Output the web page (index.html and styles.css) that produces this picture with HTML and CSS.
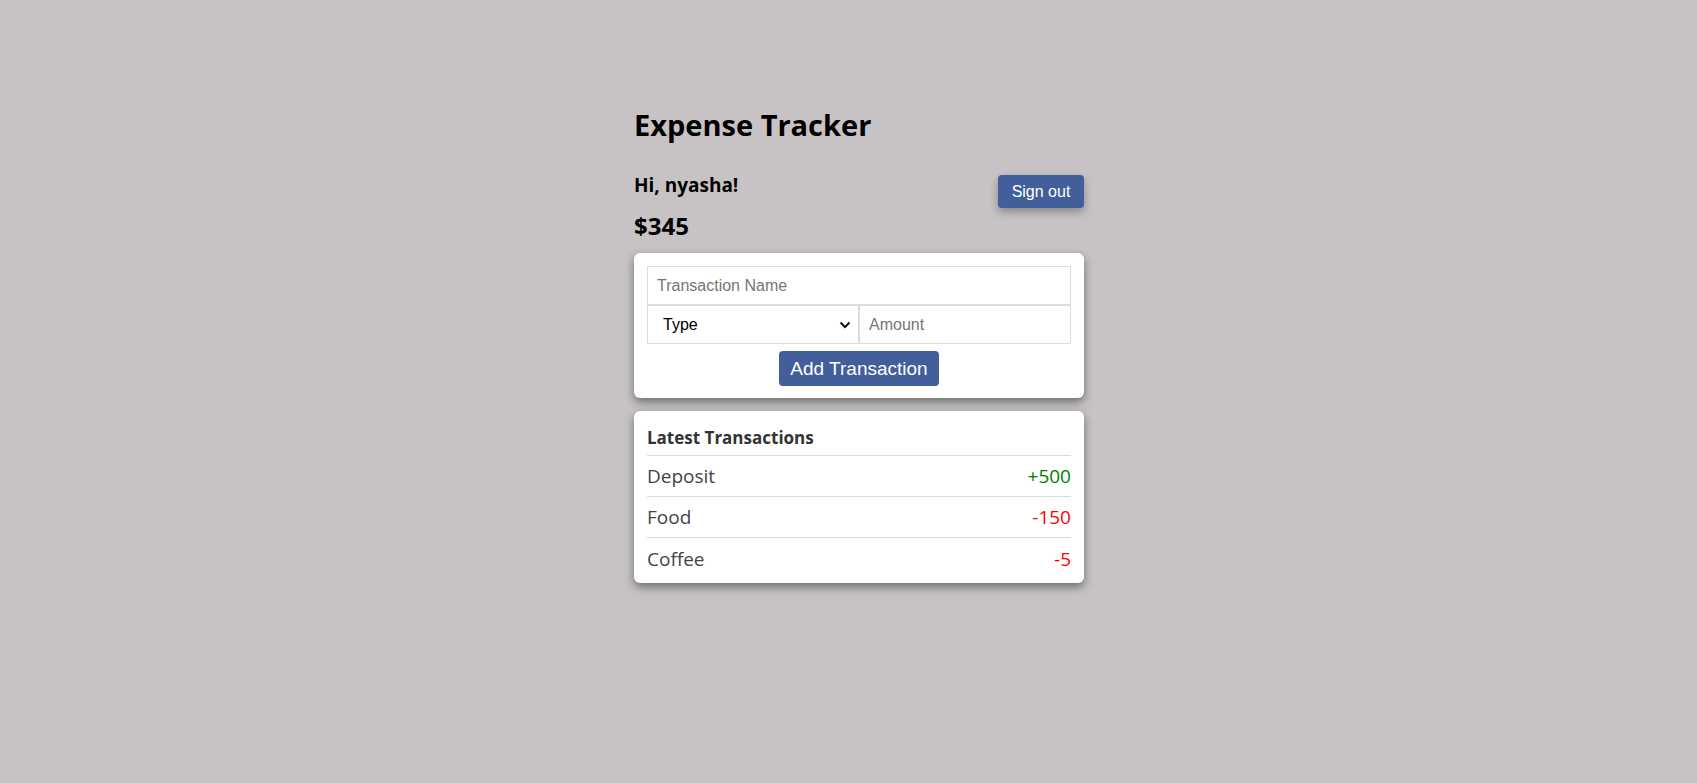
FILE: index.html
```html
<!DOCTYPE html>
<html lang="en">
<head>
<meta charset="utf-8">
<title>Expense Tracker</title>
<link rel="stylesheet" href="styles.css">
</head>
<body>
<div class="page">
  <main class="app">
    <h1 class="title">Expense Tracker</h1>
    <div class="user-row">
      <h3 class="greeting">Hi, nyasha!</h3>
      <button class="btn btn-signout" type="button">Sign out</button>
    </div>
    <h2 class="balance">$345</h2>

    <form class="card form-card">
      <input class="field field-name" type="text" placeholder="Transaction Name">
      <div class="field-row">
        <div class="select-wrap">
          <select class="field field-type">
            <option>Type</option>
            <option>Income</option>
            <option>Expense</option>
          </select>
          <svg class="chevron" width="12" height="8" viewBox="0 0 12 8"><path d="M1.5 1.5 L6 6 L10.5 1.5" fill="none" stroke="#111" stroke-width="2"/></svg>
        </div>
        <input class="field field-amount" type="text" placeholder="Amount">
      </div>
      <div class="actions">
        <button class="btn btn-add" type="button">Add Transaction</button>
      </div>
    </form>

    <section class="card list-card">
      <h4 class="list-title">Latest Transactions</h4>
      <ul class="tx-list">
        <li class="tx"><span class="tx-name">Deposit</span><span class="tx-amount pos">+500</span></li>
        <li class="tx"><span class="tx-name">Food</span><span class="tx-amount neg">-150</span></li>
        <li class="tx"><span class="tx-name">Coffee</span><span class="tx-amount neg">-5</span></li>
      </ul>
    </section>
  </main>
</div>
</body>
</html>
```

FILE: styles.css
```css
* { box-sizing: border-box; }

html, body {
  margin: 0;
  height: 100%;
}

body {
  background: #c7c3c4;
  font-family: "Open Sans", "Noto Sans", sans-serif;
  color: #000;
}

.page {
  display: flex;
  justify-content: center;
  padding-left: 21px;
  padding-top: 105px;
}

.app {
  width: 450px;
  display: flex;
  flex-direction: column;
}

.title {
  margin: 0;
  font-size: 29px;
  line-height: 40px;
  font-weight: 700;
}

.user-row {
  display: flex;
  justify-content: space-between;
  align-items: flex-start;
  margin-top: 26px;
}

.greeting {
  margin: 0;
  font-size: 19px;
  line-height: 28px;
  font-weight: 700;
}

.btn {
  font-family: "Liberation Sans", Arial, sans-serif;
  background: #425f9b;
  color: #fff;
  border: none;
  border-radius: 4px;
  cursor: pointer;
}

.btn-signout {
  margin-top: 4px;
  width: 86px;
  height: 33px;
  font-size: 16px;
  box-shadow: 0 4px 8px rgba(0, 0, 0, 0.3);
}

.balance {
  margin: 2px 0 0;
  font-size: 24px;
  line-height: 32px;
  font-weight: 700;
}

.card {
  background: #fff;
  border-radius: 6px;
  box-shadow: 0 4px 10px rgba(0, 0, 0, 0.45);
  padding: 13px;
}

.form-card {
  margin-top: 11px;
  padding-bottom: 12px;
  display: flex;
  flex-direction: column;
}

.field {
  font-family: "Liberation Sans", Arial, sans-serif;
  font-size: 16px;
  height: 39px;
  border: 1px solid #dcdcdc;
  border-radius: 0;
  padding: 0 9px;
  background: #fff;
  color: #000;
  outline: none;
  margin: 0;
}

.field::placeholder {
  color: #767676;
}

.field-name {
  width: 100%;
}

.field-row {
  display: flex;
}

.select-wrap {
  position: relative;
  width: 50%;
  min-width: 0;
  display: flex;
}

.field-type {
  width: 100%;
  min-width: 0;
  appearance: none;
  -webkit-appearance: none;
  padding-left: 15px;
}

.chevron {
  position: absolute;
  right: 8px;
  top: 16px;
  pointer-events: none;
}

.field-amount {
  width: 50%;
  min-width: 0;
}

.actions {
  display: flex;
  justify-content: center;
  margin-top: 7px;
}

.btn-add {
  width: 160px;
  height: 35px;
  font-size: 19px;
  padding: 0;
}

.list-card {
  margin-top: 13px;
  padding-top: 10px;
  padding-bottom: 4px;
}

.list-title {
  margin: 0;
  font-size: 17px;
  line-height: 34px;
  font-weight: 700;
  color: #333;
  border-bottom: 1px solid #dadada;
}

.tx-list {
  list-style: none;
  margin: 0;
  padding: 0;
}

.tx {
  display: flex;
  justify-content: space-between;
  align-items: center;
  height: 41px;
  font-size: 19px;
  color: #444;
  border-bottom: 1px solid #dadada;
}

.tx:last-child {
  border-bottom: none;
}

.tx-amount.pos { color: #008000; }
.tx-amount.neg { color: #ff0000; }
```
